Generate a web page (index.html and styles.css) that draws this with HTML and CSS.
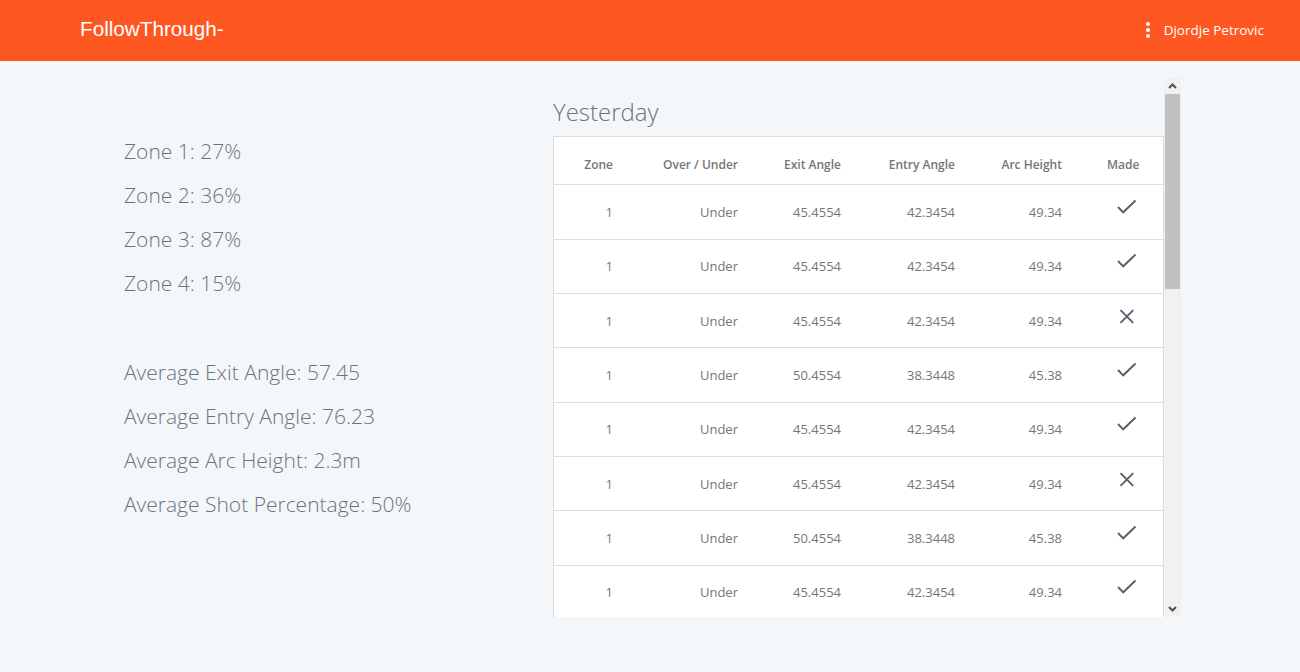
FILE: index.html
```html
<!DOCTYPE html>
<html lang="en">
<head>
<meta charset="utf-8">
<title>FollowThrough</title>
<link rel="stylesheet" href="styles.css">
</head>
<body>
<header class="topbar">
  <div class="brand">FollowThrough-</div>
  <div class="user">
    <svg class="dots" width="4" height="16" viewBox="0 0 4 16"><circle cx="2" cy="2" r="2" fill="#fff"/><circle cx="2" cy="8" r="2" fill="#fff"/><circle cx="2" cy="14" r="2" fill="#fff"/></svg>
    <span class="user-name">Djordje Petrovic</span>
  </div>
</header>
<main class="main">
  <section class="stats">
    <div class="stat-group">
      <p class="stat">Zone 1: 27%</p>
      <p class="stat">Zone 2: 36%</p>
      <p class="stat">Zone 3: 87%</p>
      <p class="stat">Zone 4: 15%</p>
    </div>
    <div class="stat-group stat-group-avg">
      <p class="stat">Average Exit Angle: 57.45</p>
      <p class="stat">Average Entry Angle: 76.23</p>
      <p class="stat">Average Arc Height: 2.3m</p>
      <p class="stat">Average Shot Percentage: 50%</p>
    </div>
  </section>
  <section class="panel">
    <div class="panel-body">
      <h2 class="panel-title">Yesterday</h2>
      <div class="card">
        <table class="shots">
          <colgroup>
            <col class="c-zone"><col class="c-ou"><col class="c-exit"><col class="c-entry"><col class="c-arc"><col class="c-made">
          </colgroup>
          <thead>
            <tr><th>Zone</th><th>Over / Under</th><th>Exit Angle</th><th>Entry Angle</th><th>Arc Height</th><th class="made">Made</th></tr>
          </thead>
          <tbody id="rows"></tbody>
        </table>
      </div>
    </div>
    <div class="scrollbar" aria-hidden="true">
      <div class="sb-btn">
        <svg width="17" height="16" viewBox="0 0 17 16"><polyline points="5,10 8.5,6.5 12,10" fill="none" stroke="#505050" stroke-width="2"/></svg>
      </div>
      <div class="sb-track">
        <div class="sb-thumb"></div>
      </div>
      <div class="sb-btn">
        <svg width="17" height="16" viewBox="0 0 17 16"><polyline points="5,6 8.5,9.5 12,6" fill="none" stroke="#505050" stroke-width="2"/></svg>
      </div>
    </div>
  </section>
</main>
<script src="app.js"></script>
</body>
</html>
```
FILE: app.js
```js
(function () {
  var a = ["1", "Under", "45.4554", "42.3454", "49.34"];
  var b = ["1", "Under", "50.4554", "38.3448", "45.38"];
  var pattern = [[a, 1], [a, 1], [a, 0], [b, 1], [a, 1], [a, 0], [b, 1], [a, 1]];
  var check = '<svg class="ico" width="24" height="24" viewBox="0 0 24 24"><polyline points="3,9 8.2,14.3 20.5,2.5" fill="none" stroke="#55606b" stroke-width="1.9"/></svg>';
  var cross = '<svg class="ico" width="24" height="24" viewBox="0 0 24 24"><path d="M5.5 3.2 L18.2 15.9 M18.2 3.2 L5.5 15.9" fill="none" stroke="#55606b" stroke-width="1.9"/></svg>';
  var html = "";
  for (var i = 0; i < pattern.length; i++) {
    var p = pattern[i];
    html += "<tr>";
    for (var j = 0; j < 5; j++) html += "<td>" + p[0][j] + "</td>";
    html += '<td class="made">' + (p[1] ? check : cross) + "</td></tr>";
  }
  document.getElementById("rows").innerHTML = html;
})();
```
FILE: styles.css
```css
html, body {
  margin: 0;
  padding: 0;
}
body {
  background: #f4f7fa;
  font-family: "Open Sans", "Liberation Sans", sans-serif;
  color: #6c757d;
}
.topbar {
  height: 61px;
  background: #ff5722;
  display: flex;
  align-items: center;
  justify-content: space-between;
  padding: 0 36px 0 80px;
}
.brand {
  font-family: "Liberation Sans", Arial, sans-serif;
  font-size: 20.7px;
  color: #fff;
  margin-top: -3px;
}
.user {
  display: flex;
  align-items: center;
  gap: 14px;
  margin-top: -2px;
}
.dots {
  display: block;
}
.user-name {
  font-size: 13.5px;
  color: #fff;
}
.main {
  display: flex;
  padding: 17px 0 0 124px;
}
.stats {
  width: 429px;
  padding-top: 51px;
}
.stat-group {
  margin: 0;
}
.stat-group-avg {
  margin-top: 45px;
}
.stat {
  margin: 0;
  font-size: 21px;
  font-weight: 300;
  line-height: 44px;
  color: #6b747e;
}
.panel {
  display: flex;
  height: 539px;
}
.panel-body {
  width: 611px;
  height: 539px;
  overflow: hidden;
}
.scrollbar {
  width: 17px;
  height: 539px;
  display: flex;
  flex-direction: column;
  background: #f1f1f1;
}
.sb-btn {
  height: 16px;
  flex: none;
}
.sb-btn svg {
  display: block;
}
.sb-track {
  flex: 1;
}
.sb-thumb {
  height: 195px;
  margin: 0 1px 0 1px;
  background: #c1c1c1;
}
.panel-title {
  margin: 0;
  padding-top: 10px;
  font-size: 24px;
  font-weight: 300;
  line-height: 48px;
  color: #6b747e;
}
.card {
  width: 611px;
  box-sizing: border-box;
  background: #fff;
  border: 1px solid #dcdcdc;
}
.shots {
  width: 609px;
  table-layout: fixed;
  border-collapse: collapse;
}
.c-zone { width: 77px; }
.c-ou { width: 125px; }
.c-exit { width: 103px; }
.c-entry { width: 114px; }
.c-arc { width: 107px; }
.c-made { width: 83px; }
.shots th {
  height: 36.4px;
  padding: 0 18px 11px 0;
  vertical-align: bottom;
  text-align: right;
  font-size: 12px;
  font-weight: 600;
  line-height: 16px;
  color: #757575;
  border-bottom: 1px solid #dedede;
}
.shots td {
  height: 53.35px;
  padding: 0 18px 0 0;
  text-align: right;
  font-size: 13px;
  color: #767676;
  border-bottom: 1px solid #dedede;
  vertical-align: middle;
}
.shots th.made {
  text-align: left;
  padding-left: 27px;
  padding-right: 0;
}
.shots td.made {
  text-align: left;
  padding-left: 35px;
  padding-right: 0;
}
.ico {
  display: block;
  margin-top: -4px;
}
```
